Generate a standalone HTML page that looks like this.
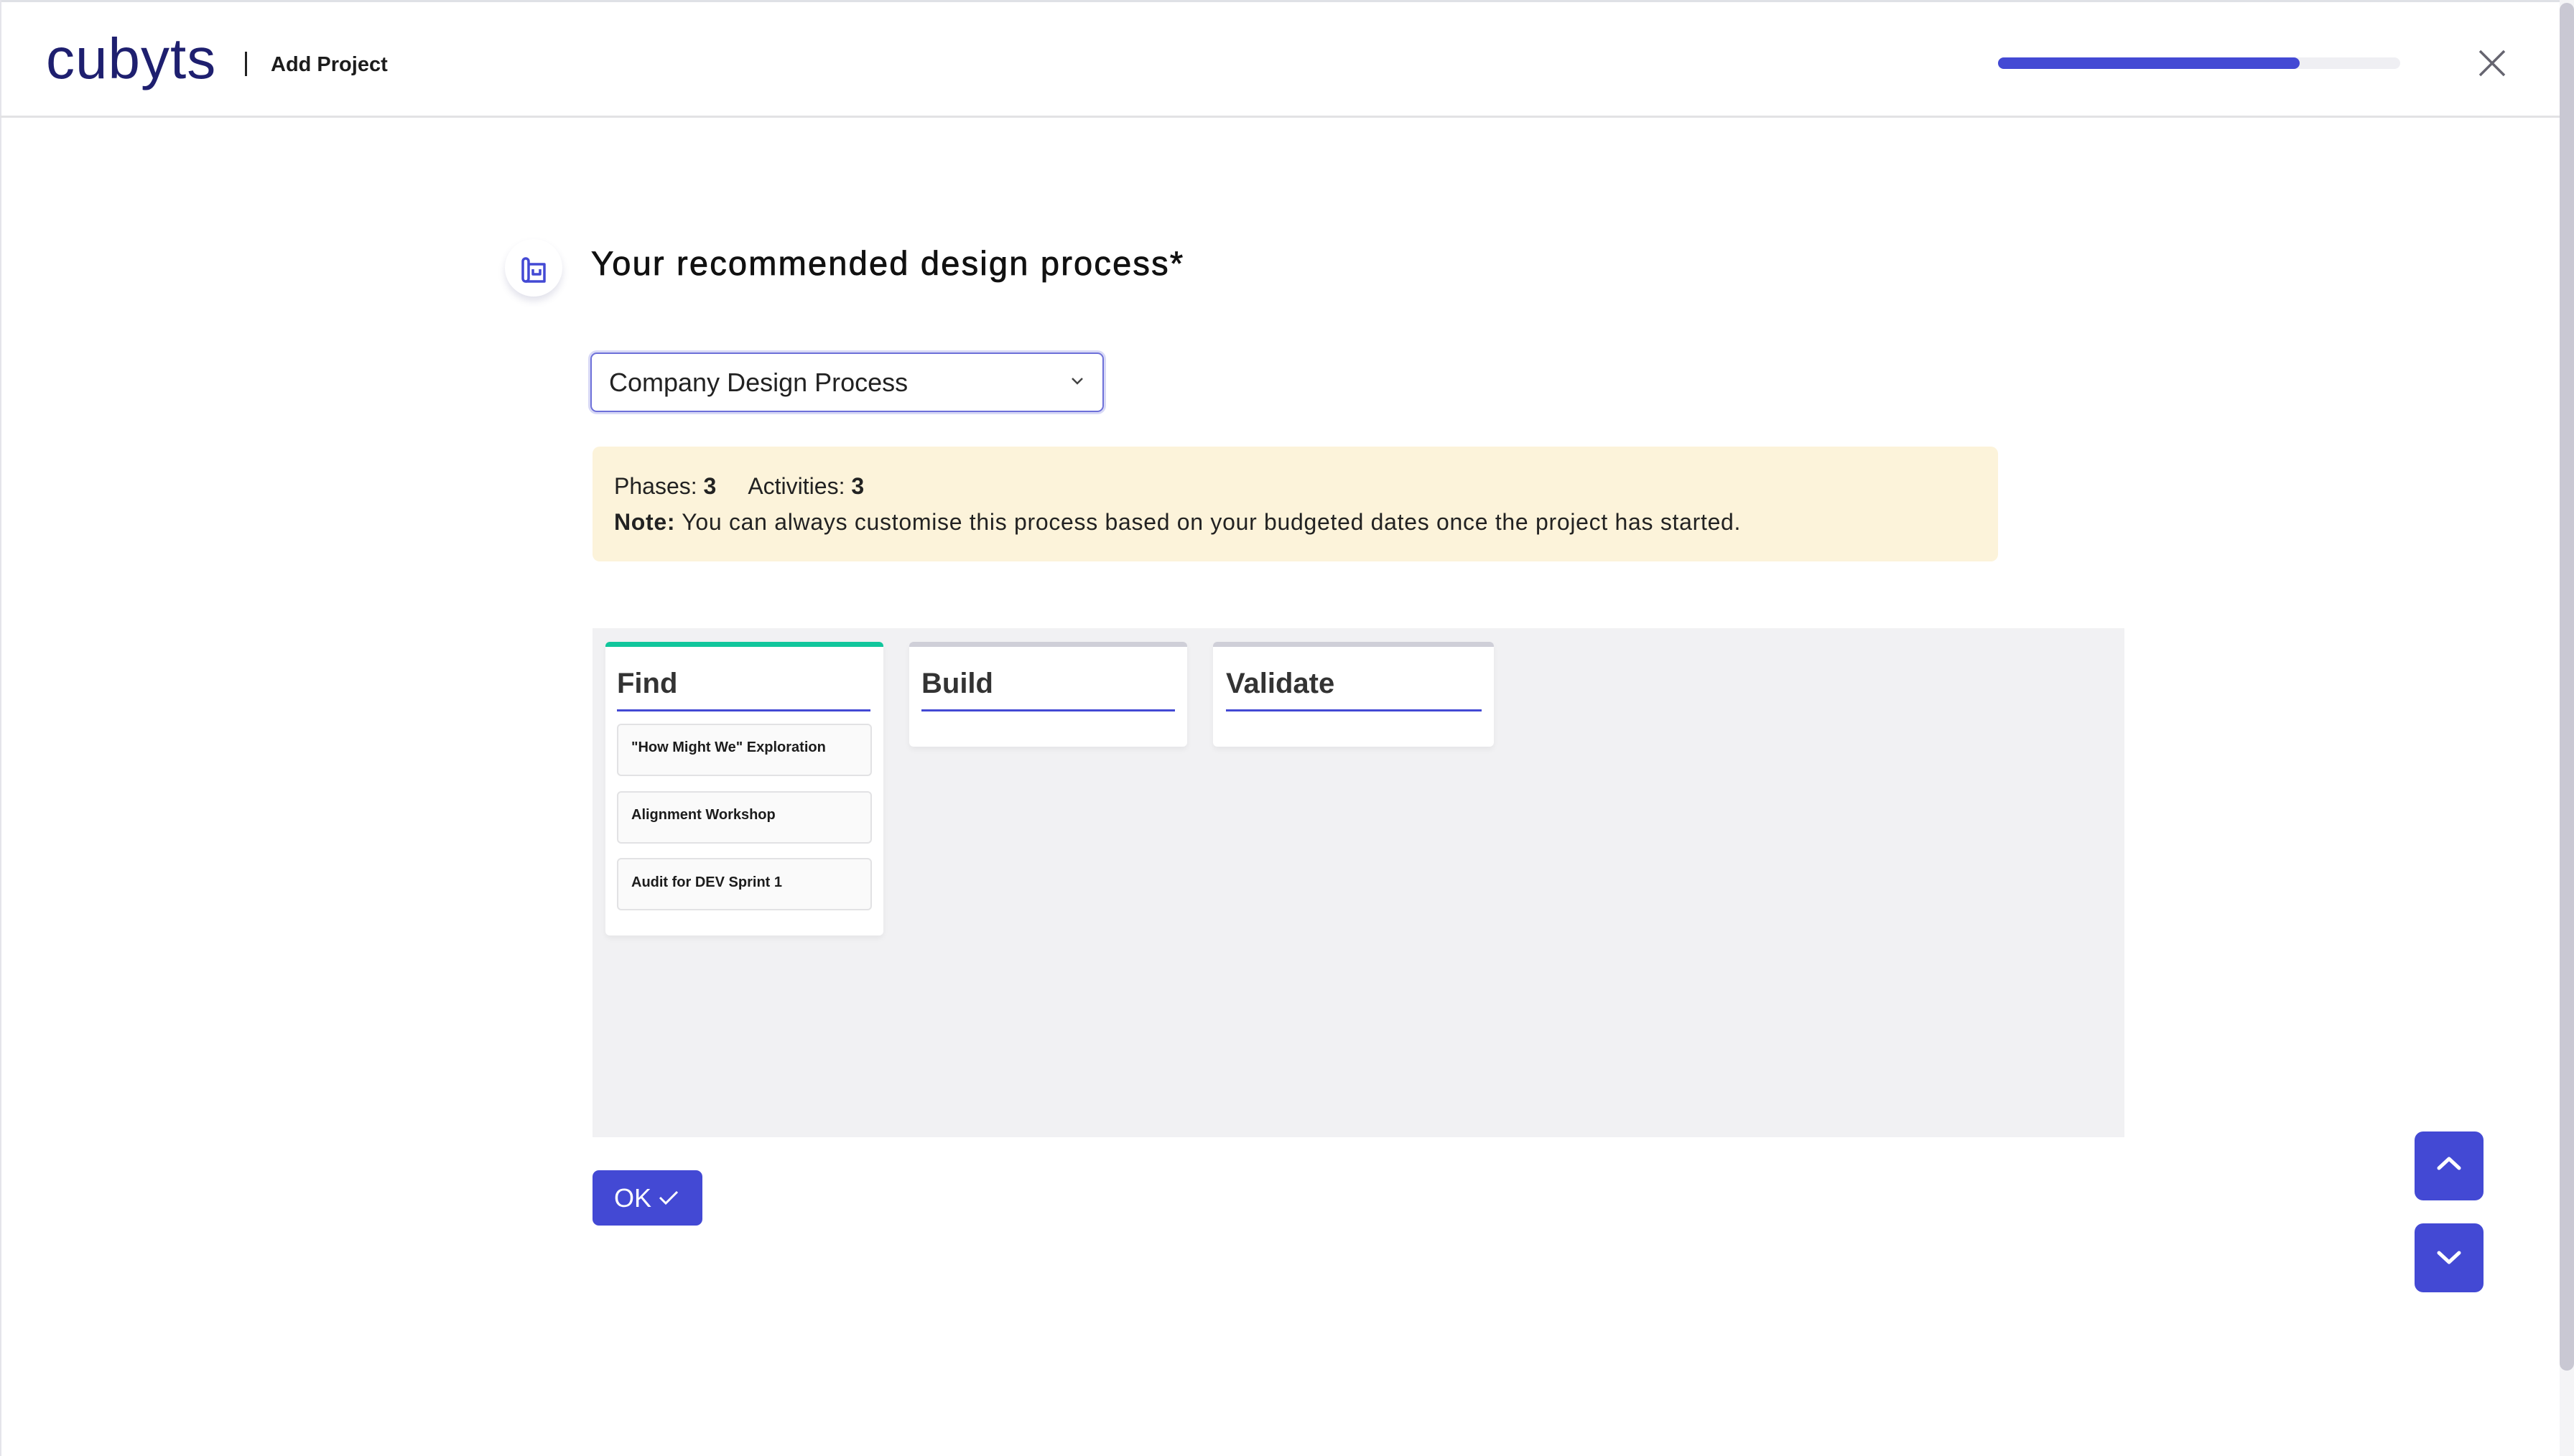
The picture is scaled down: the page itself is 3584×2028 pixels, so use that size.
<!DOCTYPE html>
<html><head><meta charset="utf-8"><style>
*{margin:0;padding:0;box-sizing:border-box}
body{width:3584px;height:2028px;background:#fff;font-family:"Liberation Sans",sans-serif;color:#1c1c1c;position:relative;overflow:hidden}
.abs{position:absolute}
</style></head><body>
<div class="abs" style="left:0;top:0;width:3584px;height:3px;background:#dfe1e6"></div>
<div class="abs" style="left:0;top:0;width:2px;height:2028px;background:#e4e4ea"></div>
<div class="abs" style="left:0;top:161px;width:3564px;height:3px;background:#e2e2e4"></div>
<div class="abs" style="left:64px;top:32px;font-size:80px;color:#1e1f6f;letter-spacing:1px;line-height:100px">cubyts</div>
<div class="abs" style="left:341px;top:72px;width:3px;height:34px;background:#222"></div>
<div class="abs" style="left:377px;top:72px;font-size:29px;font-weight:bold;line-height:36px">Add Project</div>
<div class="abs" style="left:2782px;top:80px;width:560px;height:16px;border-radius:8px;background:#efeff3"></div>
<div class="abs" style="left:2782px;top:80px;width:420px;height:16px;border-radius:8px;background:#4349d4"></div>
<svg class="abs" style="left:3450px;top:68px" width="40" height="40" viewBox="0 0 40 40"><path d="M3 3L37 37M37 3L3 37" stroke="#666570" stroke-width="3.5"/></svg>
<div class="abs" style="left:3564px;top:0;width:20px;height:2028px;background:#f4f4f6"></div>
<div class="abs" style="left:3564px;top:4px;width:20px;height:1905px;border-radius:10px;background:#c9c8d3"></div>

<div class="abs" style="left:703px;top:333px;width:80px;height:80px;border-radius:50%;background:#fff;box-shadow:0 6px 10px rgba(60,60,120,.15)"></div>
<svg class="abs" style="left:724px;top:358px" width="40" height="36" viewBox="0 0 40 36"><g fill="none" stroke="#4349d4" stroke-width="3.5" stroke-linejoin="round"><path d="M4 30V6a4 4 0 0 1 8 0v24a4 4 0 0 1-8 0z"/><path d="M12 10h22v24H8"/><path d="M18 17v7h10v-7"/></g></svg>
<div class="abs" style="left:823px;top:337px;font-size:47px;font-weight:500;line-height:60px;color:#111;letter-spacing:2.2px;-webkit-text-stroke:0.8px #111">Your recommended design process*</div>

<div class="abs" style="left:822px;top:491px;width:715px;height:83px;border-radius:9px;border:2px solid #6d70d9;box-shadow:0 0 0 3px #d8d9f6"></div>
<div class="abs" style="left:848px;top:510px;font-size:36px;line-height:46px;color:#222">Company Design Process</div>
<svg class="abs" style="left:1490px;top:524px" width="20" height="14" viewBox="0 0 20 14"><path d="M3 3l7 7 7-7" fill="none" stroke="#444" stroke-width="2.5"/></svg>

<div class="abs" style="left:825px;top:622px;width:1957px;height:160px;border-radius:10px;background:#fcf3da"></div>
<div class="abs" style="left:855px;top:656px;font-size:32px;line-height:42px;color:#222">Phases: <b>3</b><span style="display:inline-block;width:44px"></span>Activities: <b>3</b></div>
<div class="abs" style="left:855px;top:706px;font-size:32px;line-height:42px;color:#222;letter-spacing:0.7px"><b>Note:</b> You can always customise this process based on your budgeted dates once the project has started.</div>

<div class="abs" style="left:825px;top:875px;width:2133px;height:709px;background:#f1f1f3"></div>
<div class="abs" style="left:843px;top:894px;width:387px;height:409px;background:#fff;border-radius:6px;border-top:7px solid #11c69c;box-shadow:0 4px 8px rgba(0,0,0,.05)"></div>
<div class="abs" style="left:1266px;top:894px;width:387px;height:146px;background:#fff;border-radius:6px;border-top:7px solid #cfcfd8;box-shadow:0 4px 8px rgba(0,0,0,.05)"></div>
<div class="abs" style="left:1689px;top:894px;width:391px;height:146px;background:#fff;border-radius:6px;border-top:7px solid #cfcfd8;box-shadow:0 4px 8px rgba(0,0,0,.05)"></div>
<div class="abs" style="left:859px;top:927px;font-size:40px;font-weight:bold;line-height:50px;color:#333">Find</div>
<div class="abs" style="left:1283px;top:927px;font-size:40px;font-weight:bold;line-height:50px;color:#333">Build</div>
<div class="abs" style="left:1707px;top:927px;font-size:40px;font-weight:bold;line-height:50px;color:#333">Validate</div>
<div class="abs" style="left:859px;top:988px;width:353px;height:3px;background:#4349d4"></div>
<div class="abs" style="left:1283px;top:988px;width:353px;height:3px;background:#4349d4"></div>
<div class="abs" style="left:1707px;top:988px;width:356px;height:3px;background:#4349d4"></div>
<div class="abs" style="left:859px;top:1008px;width:355px;height:73px;background:#fafafa;border:2px solid #e2e2e4;border-radius:6px"></div>
<div class="abs" style="left:859px;top:1102px;width:355px;height:73px;background:#fafafa;border:2px solid #e2e2e4;border-radius:6px"></div>
<div class="abs" style="left:859px;top:1195px;width:355px;height:73px;background:#fafafa;border:2px solid #e2e2e4;border-radius:6px"></div>
<div class="abs" style="left:879px;top:1029px;font-size:20px;font-weight:bold;line-height:24px">"How Might We" Exploration</div>
<div class="abs" style="left:879px;top:1123px;font-size:20px;font-weight:bold;line-height:24px">Alignment Workshop</div>
<div class="abs" style="left:879px;top:1217px;font-size:20px;font-weight:bold;line-height:24px">Audit for DEV Sprint 1</div>

<div class="abs" style="left:825px;top:1630px;width:153px;height:77px;border-radius:9px;background:#4349d4"></div>
<div class="abs" style="left:855px;top:1647px;font-size:36px;line-height:44px;color:#fff">OK</div>
<svg class="abs" style="left:916px;top:1656px" width="30" height="24" viewBox="0 0 30 24"><path d="M3 12l8 8L27 4" fill="none" stroke="#fff" stroke-width="3"/></svg>

<div class="abs" style="left:3362px;top:1576px;width:96px;height:96px;border-radius:12px;background:#4349d4"></div>
<svg class="abs" style="left:3390px;top:1606px" width="40" height="30" viewBox="0 0 40 30"><path d="M6 21L20 8l14 13" fill="none" stroke="#fff" stroke-width="5" stroke-linecap="round" stroke-linejoin="round"/></svg>
<div class="abs" style="left:3362px;top:1704px;width:96px;height:96px;border-radius:12px;background:#4349d4"></div>
<svg class="abs" style="left:3390px;top:1737px" width="40" height="30" viewBox="0 0 40 30"><path d="M6 8l14 13L34 8" fill="none" stroke="#fff" stroke-width="5" stroke-linecap="round" stroke-linejoin="round"/></svg>
</body></html>
